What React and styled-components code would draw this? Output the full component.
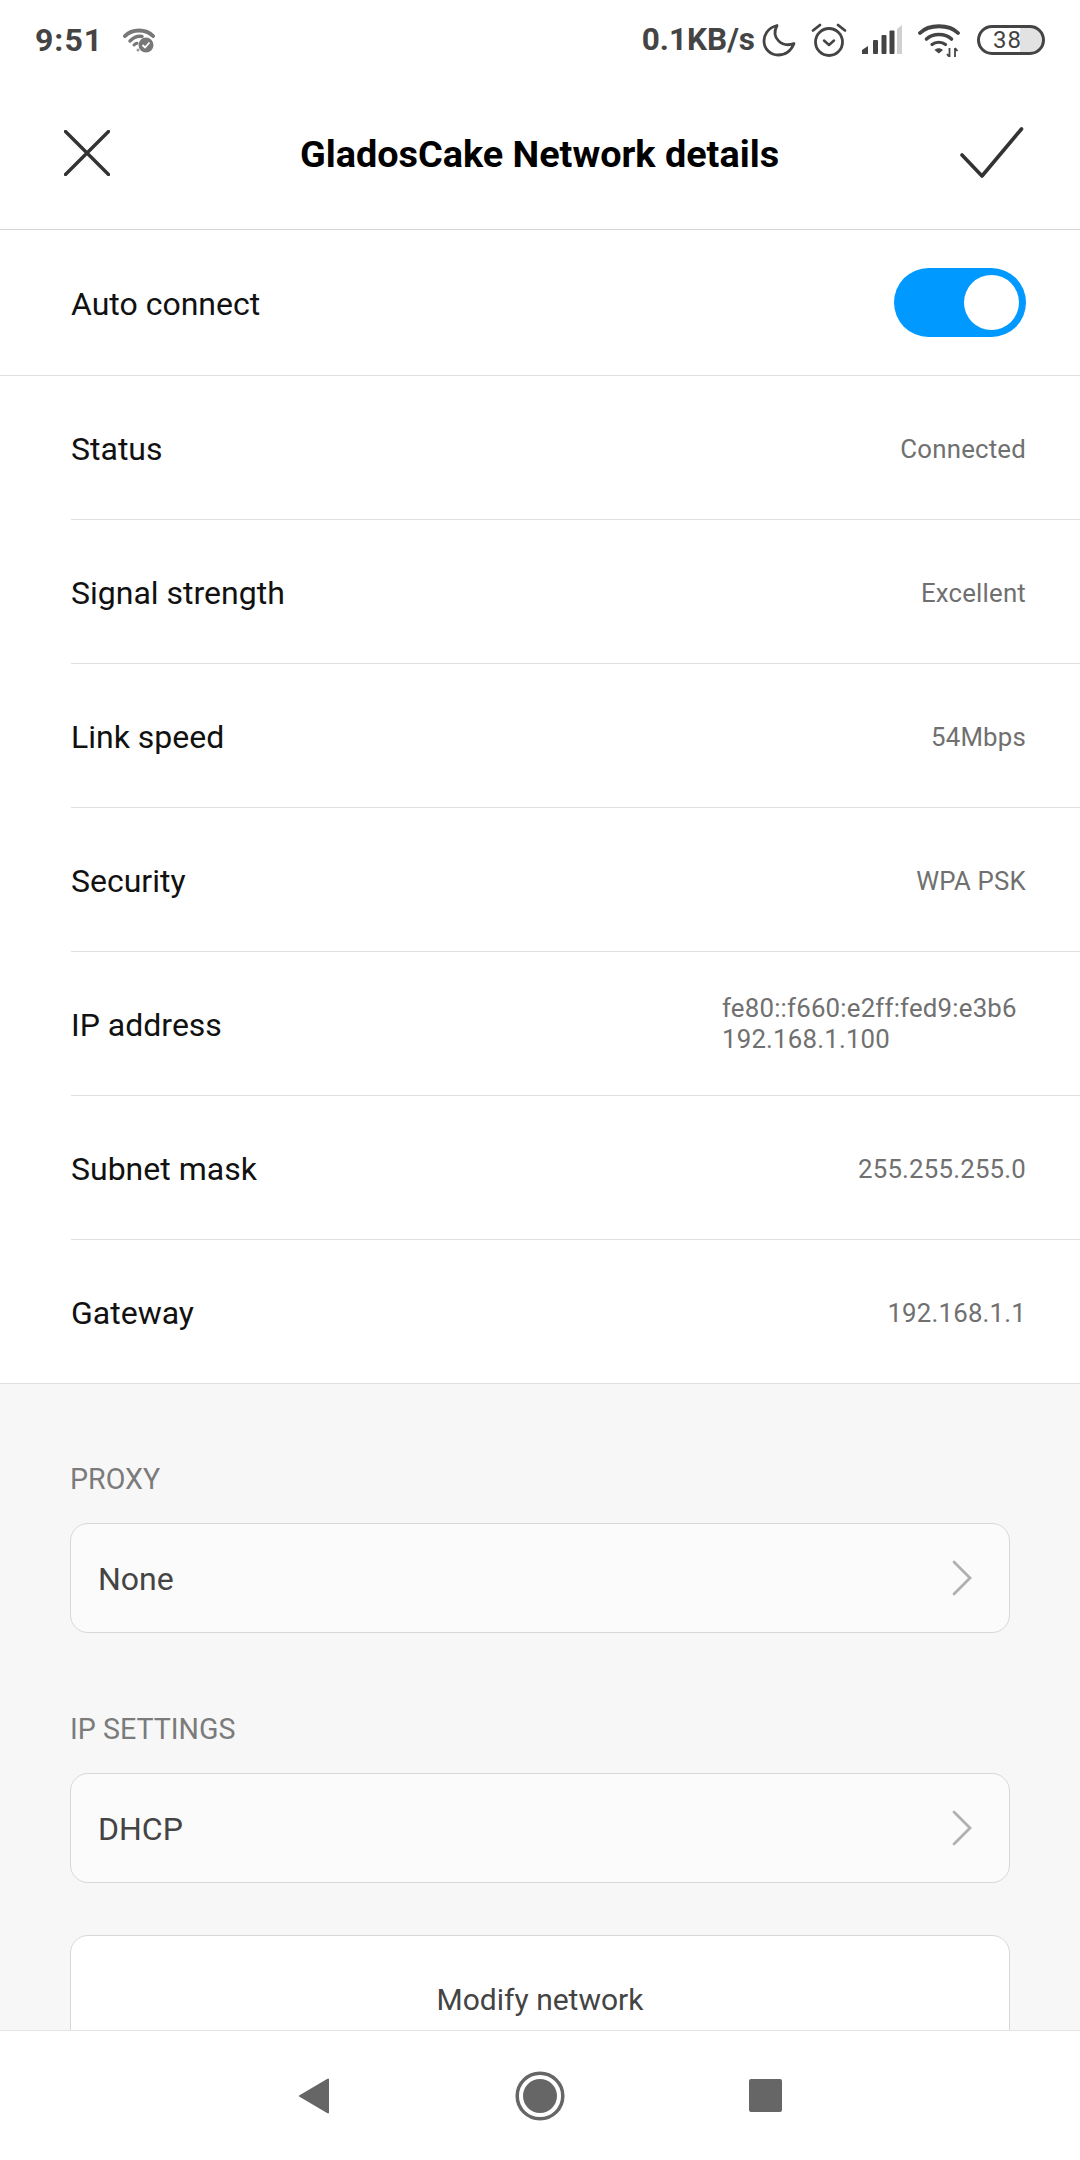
import React from "react";
import styled, { createGlobalStyle } from "styled-components";

const Global = createGlobalStyle`
  html, body { margin: 0; padding: 0; background: #fff; }
  body { font-family: Roboto, "Liberation Sans", sans-serif; }
`;

const Page = styled.div`
  width: 1080px; height: 2160px; display: flex; flex-direction: column;
  overflow: hidden; background: #fff;
`;
const StatusBar = styled.div`
  height: 76px; flex: none; display: flex; align-items: center; justify-content: space-between;
  padding: 3px 35px 0 35px; box-sizing: border-box; color: #444;
`;
const StatusGroup = styled.div`display: flex; align-items: center;`;
const Clock = styled.span`font-size: 32px; font-weight: 700; letter-spacing: 1px;`;
const Speed = styled.span`font-size: 31.5px; font-weight: 700; margin-right: 7px;`;
const Header = styled.header`
  height: 154px; flex: none; box-sizing: border-box; border-bottom: 1px solid #d6d6d6;
  display: grid; grid-template-columns: 180px 1fr 180px; align-items: center; padding: 0 56px 0 64px;
`;
const Title = styled.h1`
  margin: 0; padding: 3px 9px 0 0; text-align: center; font-size: 37.8px; font-weight: 700; color: #000; white-space: nowrap;
`;
const HeaderRight = styled.div`display: flex; justify-content: flex-end;`;
const Row = styled.div`
  height: ${p => p.$h || 144}px; box-sizing: border-box; display: flex; align-items: center; justify-content: space-between;
  margin-left: ${p => (p.$full ? 0 : 71)}px; padding: 0 54px 0 ${p => (p.$full ? 71 : 0)}px;
  border-bottom: 1px solid #e0e0e0; flex: none;
`;
const Label = styled.span`font-size: 32px; color: #111; padding-top: 2px;`;
const Value = styled.span`font-size: 25.8px; color: #707070; letter-spacing: .2px; padding-top: 2px;`;
const MultiValue = styled.div`
  width: 304px; font-size: 25.8px; line-height: 31px; color: #707070; letter-spacing: .2px;
`;
const Toggle = styled.div`
  width: 132px; height: 69px; border-radius: 35px; background: #0099ff; position: relative; flex: none;
  &::after {
    content: ""; position: absolute; right: 7px; top: 7px; width: 55px; height: 55px;
    border-radius: 50%; background: #fff;
  }
`;
const Gray = styled.section`
  flex: 1; min-height: 0; overflow: hidden; background: #f7f7f7; padding: 0 70px;
`;
const SectionLabel = styled.div`
  font-size: 28.6px; color: #7b7b7b; line-height: 32px; margin-bottom: 28px; padding-top: ${p => p.$top}px;
`;
const Card = styled.div`
  height: 110px; box-sizing: border-box; border: 1px solid #d8d8d8; border-radius: 18px; background: #fbfbfb;
  display: flex; align-items: center; justify-content: space-between; padding: 0 37px 0 27px;
`;
const CardText = styled.span`font-size: 32px; color: #444; padding-top: 2px;`;
const ActionCard = styled.div`
  margin-top: 52px; height: 200px; box-sizing: border-box; border: 1px solid #d8d8d8; border-radius: 18px;
  background: #fff; display: flex; justify-content: center; padding-top: 46px;
  font-size: 30px; color: #444;
`;
const Nav = styled.nav`
  height: 130px; flex: none; box-sizing: border-box; border-top: 1px solid #e4e4e4; background: #fff;
  display: grid; grid-template-columns: repeat(3, 60px); justify-content: center; column-gap: 165px;
  align-items: center; justify-items: center;
`;

const Icon = ({ w, h, children, ...r }) => <svg width={w} height={h} viewBox={`0 0 ${w} ${h}`} fill="none" {...r}>{children}</svg>;

const WifiCheckIcon = () => (
  <Icon w={32} h={26} style={{ marginLeft: 20 }}>
    <path d="M2 9C9 1.500 23 1.500 30 9" stroke="#777" strokeWidth="4" strokeLinecap="round" />
    <path d="M7 14c4-4 9-5 12-4.500" stroke="#777" strokeWidth="3.500" strokeLinecap="round" />
    <path d="M11 18c1-1 2-1.500 3-1.800" stroke="#777" strokeWidth="3" strokeLinecap="round" />
    <circle cx="15" cy="23" r="1.500" fill="#999" />
    <circle cx="23" cy="18" r="7.500" fill="#777" />
    <path d="M19.500 18l2.500 2.500 4.500-5" stroke="#fff" strokeWidth="1.800" fill="none" />
  </Icon>
);
const MoonIcon = () => (
  <Icon w={34} h={34} style={{ marginRight: 15 }}>
    <path d="M15 2.500C5 5 2 13 2 18c0 8 6.500 14 14 14 7 0 13-4 16-11.500C20 25 8.500 15 15 2.500Z" stroke="#444" strokeWidth="2.800" strokeLinejoin="round" />
  </Icon>
);
const AlarmIcon = () => (
  <Icon w={36} h={36} style={{ marginRight: 15 }}>
    <circle cx="18" cy="20" r="13.500" stroke="#444" strokeWidth="2.800" />
    <path d="M2 8.500L9 3M34 8.500L27 3" stroke="#444" strokeWidth="2.800" strokeLinecap="round" />
    <path d="M13 18.500l5 4.500 5-4.500" stroke="#444" strokeWidth="2.500" strokeLinecap="round" strokeLinejoin="round" />
  </Icon>
);
const SignalIcon = () => (
  <Icon w={40} h={30} style={{ marginRight: 16 }}>
    <path d="M0 29v-4l6-4v8Z" fill="#444" />
    <rect x="11" y="15" width="5" height="14" rx="1" fill="#444" />
    <rect x="19.500" y="10" width="5" height="19" rx="1" fill="#444" />
    <rect x="27.500" y="5.500" width="5" height="23.500" rx="1" fill="#444" />
    <path d="M35 4l5-4v29h-5Z" fill="#d0d0d0" />
  </Icon>
);
const WifiIcon = () => (
  <Icon w={44} h={34} style={{ marginRight: 15 }}>
    <path d="M2 10C11 1 31 1 40 10" stroke="#444" strokeWidth="3.800" strokeLinecap="round" />
    <path d="M8.500 16C15 10 27 10 33.500 16" stroke="#444" strokeWidth="3.600" strokeLinecap="round" />
    <path d="M14 21.500c3.500-3 10-3 13.500 0" stroke="#444" strokeWidth="3.200" strokeLinecap="round" />
    <path d="M16.500 27c2.500-2.500 6-2.500 8.500 0l-4.200 3.500Z" fill="#444" />
    <path d="M31.500 25v9M29 31l2.500 3M37 25v9M37 25l2.500 3" stroke="#444" strokeWidth="1.800" />
  </Icon>
);
const BatteryBox = styled.div`
  width: 68px; height: 30px; box-sizing: border-box; border: 3px solid #444; border-radius: 15px;
  display: flex; align-items: center; justify-content: center;
  font-size: 24px; letter-spacing: 1px; color: #444; padding-right: 7px;
  background: linear-gradient(90deg, #fff 0 64%, #e2e2e2 64% 100%);
`;
const CloseIcon = () => (
  <Icon w={46} h={46}>
    <path d="M2 2L45 45M45 2L2 45" transform="translate(-.5 -.5)" stroke="#333" strokeWidth="3.400" strokeLinecap="round" />
  </Icon>
);
const CheckIcon = () => (
  <Icon w={66} h={52}>
    <path d="M4 28L24 49L63.500 2" stroke="#333" strokeWidth="3.600" strokeLinecap="round" strokeLinejoin="round" />
  </Icon>
);
const Chevron = () => (
  <Icon w={20} h={36}>
    <path d="M2 2L18 18L2 34" stroke="#b0b0b0" strokeWidth="2.800" strokeLinecap="round" />
  </Icon>
);
const BackIcon = () => (
  <Icon w={32} h={38} style={{ marginRight: 3 }}>
    <path d="M30 2.500v33L2 19Z" fill="#666" stroke="#666" strokeWidth="2" strokeLinejoin="round" />
  </Icon>
);
const HomeIcon = () => (
  <Icon w={50} h={50}>
    <circle cx="25" cy="25" r="22.800" stroke="#666" strokeWidth="3.500" />
    <circle cx="25" cy="25" r="17" fill="#666" />
  </Icon>
);
const StopIcon = () => (
  <Icon w={33} h={33}>
    <rect width="33" height="33" rx="2" fill="#666" />
  </Icon>
);

const rows = [
  ["Status", "Connected"],
  ["Signal strength", "Excellent"],
  ["Link speed", "54Mbps"],
  ["Security", "WPA PSK"],
  ["IP address", ["fe80::f660:e2ff:fed9:e3b6", "192.168.1.100"]],
  ["Subnet mask", "255.255.255.0"],
];

export default function App() {
  return (
    <Page>
      <Global />
      <StatusBar>
        <StatusGroup>
          <Clock>9:51</Clock>
          <WifiCheckIcon />
        </StatusGroup>
        <StatusGroup>
          <Speed>0.1KB/s</Speed>
          <MoonIcon />
          <AlarmIcon />
          <SignalIcon />
          <WifiIcon />
          <BatteryBox>38</BatteryBox>
        </StatusGroup>
      </StatusBar>
      <Header>
        <CloseIcon />
        <Title>GladosCake Network details</Title>
        <HeaderRight><CheckIcon /></HeaderRight>
      </Header>
      <Row $full $h={146}>
        <Label>Auto connect</Label>
        <Toggle />
      </Row>
      {rows.map(([k, v]) => (
        <Row key={k}>
          <Label>{k}</Label>
          {Array.isArray(v) ? (
            <MultiValue>{v.map(line => <div key={line}>{line}</div>)}</MultiValue>
          ) : (
            <Value>{v}</Value>
          )}
        </Row>
      ))}
      <Row $full>
        <Label>Gateway</Label>
        <Value>192.168.1.1</Value>
      </Row>
      <Gray>
        <SectionLabel $top={79}>PROXY</SectionLabel>
        <Card><CardText>None</CardText><Chevron /></Card>
        <SectionLabel $top={80}>IP SETTINGS</SectionLabel>
        <Card><CardText>DHCP</CardText><Chevron /></Card>
        <ActionCard>Modify network</ActionCard>
      </Gray>
      <Nav>
        <BackIcon />
        <HomeIcon />
        <StopIcon />
      </Nav>
    </Page>
  );
}
